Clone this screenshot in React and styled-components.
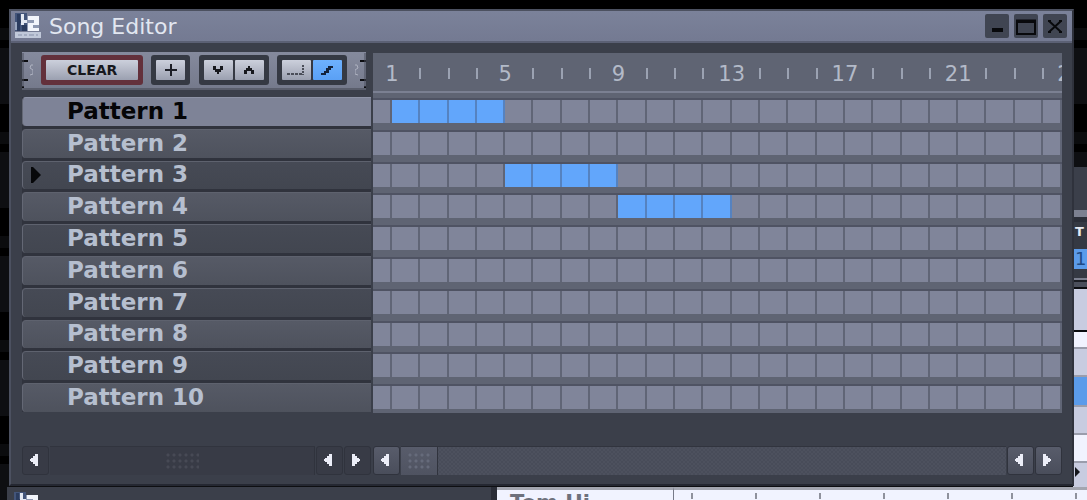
import React, { useState } from 'react';
import styled, { createGlobalStyle } from 'styled-components';

const GlobalStyle = createGlobalStyle`
  * {
    box-sizing: border-box;
  }

  body {
    margin: 0;
    background: #000;
    font-family: "DejaVu Sans", sans-serif;
  }

  button {
    border: none;
    padding: 0;
    margin: 0;
    font-family: inherit;
    cursor: pointer;
  }
`;

const Desktop = styled.div`
  position: relative;
  min-height: 100vh;
  overflow: hidden;
  background: repeating-linear-gradient(#000 0 28px, #0b0c0e 28px 40px, #000 40px 48px, #0e0f12 48px 104px);
`;

/* windows */

const Window = styled.section`
  position: absolute;
  top: 9px;
  left: 9px;
  right: 13px;
  display: flex;
  flex-direction: column;
  border: 2px solid;
  border-color: #4c5160 #2f323c #252832 #4c5160;
  background: #3b3f4a;
`;

const TitleBar = styled.header`
  display: flex;
  align-items: center;
  gap: 8px;
  height: 32px;
  padding: 0 5px 0 4px;
  background: linear-gradient(#7b829a, #747a92);
  border-bottom: 2px solid #5b6074;
`;

const Title = styled.h1`
  flex: 1;
  margin: 0;
  padding-top: 2px;
  font-size: 22px;
  line-height: 28px;
  font-weight: 400;
  color: #e2e7f1;
`;

const WindowButtons = styled.div`
  display: flex;
  gap: 5px;
`;

const WindowButton = styled.button`
  display: flex;
  width: 24px;
  height: 24px;
  background: #404552;
  border-radius: 2px;
`;

const Body = styled.div`
  display: grid;
  grid-template-columns: 349px minmax(0, 1fr);
  column-gap: 2px;
  padding: 9px 10px 9px 11px;
`;

/* toolbar */

const ToolbarArea = styled.div`
  height: 45px;
  padding-right: 5px;
`;

const Toolbar = styled.div`
  display: flex;
  align-items: center;
  justify-content: space-between;
  height: 38px;
  background: linear-gradient(#858a9d, #757a8c);
  border-bottom: 2px solid #5a5e6c;
`;

const Bracket = styled.svg`
  flex: none;
  width: 11px;
  height: 36px;
  transform: ${props => (props.$flip ? 'scaleX(-1)' : 'none')};
`;

const ButtonFrame = styled.div`
  display: flex;
  gap: 2px;
  height: 30px;
  padding: 5px;
  border-radius: 3px;
  background: ${props => (props.$danger ? '#63303b' : '#353943')};
`;

const ToolButton = styled.button`
  display: flex;
  align-items: center;
  justify-content: center;
  width: ${props => (props.$wide ? '92px' : '29px')};
  height: 20px;
  border-radius: 1px;
  font-size: 14px;
  line-height: 20px;
  font-weight: 700;
  color: #17181d;
  background: ${props => (props.$active
    ? 'linear-gradient(#6db1ff, #5aa0f5)'
    : 'linear-gradient(#ccd0dc, #9ba0b0)')};
`;

/* ruler */

const Ruler = styled.div`
  display: grid;
  grid-template-columns: 1fr repeat(24, 6fr) 1fr;
  align-content: center;
  height: 38px;
  margin-top: 1px;
  padding-top: 3px;
  overflow: hidden;
  background: #5f6473;
`;

const RulerLine = styled.div`
  height: 6px;
  background: #5f6473;
  border-top: 2px solid #7b8092;
`;

const RulerMark = styled.span`
  display: flex;
  align-items: center;
  justify-content: ${props => (props.$last ? 'flex-start' : 'center')};
  min-width: 0;
  height: 28px;
  font-size: 21px;
  white-space: nowrap;
  color: #b3bac8;
`;

const RulerTick = styled.i`
  width: 2px;
  height: 11px;
  background: #9ba2b2;
`;

/* patterns */

const PatternList = styled.div`
  display: grid;
  grid-template-rows: repeat(10, minmax(0, 1fr));
  row-gap: 3px;
  height: 315px;
  background: #30333d;
`;

const patternBackground = (props) => {
  if (props.$selected) return '#7e8397';
  return props.$odd ? 'linear-gradient(#464a55, #424650)' : 'linear-gradient(#565a66, #4e525d)';
};

const PatternButton = styled.button`
  display: flex;
  align-items: center;
  padding-bottom: 2px;
  border-radius: 4px 0 0 4px;
  border-top: 1px solid ${props => (props.$selected ? '#8e93a6' : '#5e626e')};
  border-left: 1px solid #646875;
  background: ${patternBackground};
  color: ${props => (props.$selected ? '#050507' : '#b6bfcf')};
  font-size: 23px;
  line-height: 24px;
  font-weight: 700;
  text-align: left;
`;

const PatternMark = styled.span`
  display: flex;
  width: 44px;
  padding: 2px 0 0 7px;
`;

const Song = styled.div`
  display: grid;
  grid-template-rows: repeat(10, minmax(0, 1fr));
  row-gap: 3px;
  height: 316px;
  margin-bottom: -1px;
  padding-top: 1px;
  background: #5f6473;
`;

const SongRow = styled.div`
  display: grid;
  grid-template-columns: 2fr repeat(23, 3fr) 2fr;
  align-content: start;
  border-top: 2px solid #4f5363;
`;

const Cell = styled.button`
  min-width: 0;
  height: 23px;
  background: ${props => (props.$on ? '#62a6fb' : '#80859a')};
  border-right: 2px solid ${props => (props.$on ? '#5582c0' : '#606576')};
`;

/* scrollbars */

const ScrollBar = styled.div`
  display: flex;
  gap: 1px;
  height: 29px;
  margin-top: 34px;
`;

const ScrollButton = styled.button`
  display: flex;
  align-items: center;
  justify-content: center;
  width: 27px;
  padding-right: 3px;
  padding-bottom: 1px;
  border: 1px solid #30333d;
  border-radius: 3px;
  background: ${props => (props.$light ? 'linear-gradient(#585c6b, #4a4e5b)' : '#383b46')};
`;

const Track = styled.div`
  flex: 1;
  display: flex;
  background: ${props => (props.$light
    ? 'repeating-conic-gradient(#484c59 0 25%, #4d515e 0 50%) 0 0 / 4px 4px'
    : '#383b46')};
  border-top: 1px solid #31343e;
`;

const Thumb = styled.div`
  display: flex;
  align-items: center;
  justify-content: center;
  width: ${props => (props.$full ? '100%' : '37px')};
  background: ${props => (props.$full ? 'none' : 'linear-gradient(#585c6b, #4f5361)')};
  border-right: 1px solid #30333d;
`;

const Grip = styled.span`
  width: ${props => (props.$wide ? '34px' : '24px')};
  height: 18px;
  background: radial-gradient(circle, ${props => (props.$wide ? '#474a55' : '#666b7b')} 1px, transparent 2px) 0 0 / 6px 6px;
`;

/* windows behind */

const Mixer = styled.aside`
  position: absolute;
  top: 167px;
  right: 0;
  bottom: 0;
  width: 14px;
  display: flex;
  flex-direction: column;
  align-items: stretch;
  overflow: hidden;
  background: #3b3f4a;
`;

const MixerStrip = styled.div`
  flex: none;
  height: ${props => props.$height}px;
  background: ${props => props.$color};
  border-bottom: ${props => (props.$line ? `2px solid ${props.$line}` : 'none')};
  padding-left: 2px;
  font-size: 13px;
  line-height: 20px;
  font-weight: 700;
  color: #e6e9f2;
`;

const MixerDisplay = styled(MixerStrip)`
  font-size: 18px;
  font-weight: 400;
  color: #1f4a86;
`;

const PatternEditor = styled.section`
  position: absolute;
  top: 487px;
  left: 7px;
  right: 0;
  height: 40px;
  display: grid;
  grid-template-columns: 490px 177px minmax(0, 1fr);
`;

const EditorTitle = styled.div`
  padding: 5px 7px;
  background: #3b3f4a;
  border-right: 6px solid #2a2d37;
`;

const InstrumentName = styled.div`
  padding: 3px 13px;
  border-top: 3px solid #a3a6b0;
  border-right: 1px solid #777a88;
  background: #f1f3ff;
  color: #6e717c;
  font-size: 21px;
  line-height: 20px;
  font-weight: 700;
`;

const NoteLane = styled.div`
  display: flex;
  gap: 62px;
  padding: 3px 17px;
  overflow: hidden;
  border-top: 3px solid #a3a6b0;
  background: #f1f3ff;
`;

const NoteTick = styled.i`
  flex: none;
  width: 2px;
  height: 6px;
  background: #8f919c;
`;

const PATTERN_COUNT = 10;
const COLUMN_COUNT = 25;

const initialSong = {
  0: [1, 2, 3, 4],
  2: [5, 6, 7, 8],
  3: [9, 10, 11, 12],
};

const range = (count) => Array.from({ length: count }, (_, i) => i);

function Logo() {
  return (
    <svg width="26" height="26" viewBox="0 0 26 26" aria-hidden="true">
      <path d="M0 0h12v18H0z" fill="#43557a" />
      <path d="M2 1h3v6h2v3H5v8H2z" fill="#2b3c5e" />
      <path d="M6 1h3v6h3v3H9v2H6z" fill="#e4e9f2" />
      <path d="M7 12h5v6H7z" fill="#2b3c5e" />
      <path d="M0 9h2v8H0z" fill="#9aa7bf" />
      <path d="M12 3h12v15H12z" fill="#8d98b1" />
      <path d="M13 3h11v9h-6v3h6v3H13v-8h6V7h-6z" fill="#f2f5fb" />
      <path d="M0 19h26v6H0z" fill="#c0c8d9" />
      <path d="M3 22h4M9 22h3M14 22h5M21 22h2" stroke="#a3acc1" strokeWidth="2" />
    </svg>
  );
}

function ToolbarEnd({ flip }) {
  return (
    <Bracket viewBox="0 0 11 36" $flip={flip} aria-hidden="true">
      <path d="M0 9h6M0 28h6M0 35h2" stroke="#0c0d11" strokeWidth="2" />
      <path d="M1 1v34" stroke="#4b4f5c" strokeWidth="1" />
      <path d="M11 13H9l-1 3 3 2v4l-3 1" fill="none" stroke="#aeb2c0" strokeWidth="1" />
    </Bracket>
  );
}

function Arrow({ right }) {
  return (
    <svg width="10" height="14" viewBox="0 0 10 14" aria-hidden="true">
      <path d={right ? 'M1 1h3v2h2v2h2v1h1v2H8v1H6v2H4v2H1z' : 'M9 1H6v2H4v2H2v1H1v2h1v1h2v2h2v2h3z'} fill="#eceef8" />
    </svg>
  );
}

function App() {
  const [selected, setSelected] = useState(0);
  const [song, setSong] = useState(initialSong);
  const [mode, setMode] = useState('draw');

  const toggleCell = (row, column) => {
    const cells = song[row] || [];
    setSong({
      ...song,
      [row]: cells.includes(column) ? cells.filter(c => c !== column) : [...cells, column],
    });
  };

  return (
    <Desktop>
      <GlobalStyle />

      <Mixer>
        <MixerStrip $height={43} $color="#3b3f4a" />
        <MixerStrip $height={7} $color="#7c8090" />
        <MixerStrip $height={5} $color="#2b2e38" />
        <MixerStrip $height={27} $color="#353943">T</MixerStrip>
        <MixerDisplay $height={20} $color="#5b9bea">1</MixerDisplay>
        <MixerStrip $height={9} $color="#353943" />
        <MixerStrip $height={4} $color="#7c8090" $line="#1c1e25" />
        <MixerStrip $height={7} $color="#4a4e5b" $line="#0b0c10" />
        <MixerStrip $height={43} $color="#c8cce0" $line="#0b0c10" />
        <MixerStrip $height={17} $color="#f1f3ff" $line="#9a9dac" />
        <MixerStrip $height={28} $color="#c8cce0" $line="#9a9dac" />
        <MixerStrip $height={30} $color="#5b9bea" $line="#9a9dac" />
        <MixerStrip $height={28} $color="#c8cce0" $line="#9a9dac" />
        <MixerStrip $height={28} $color="#f1f3ff" $line="#9a9dac" />
        <MixerStrip $height={28} $color="#c8cce0">
          <svg width="6" height="10" viewBox="0 0 6 10" aria-hidden="true">
            <path d="M0 0l5 5-5 5z" fill="#14161c" />
          </svg>
        </MixerStrip>
      </Mixer>

      <PatternEditor>
        <EditorTitle><Logo /></EditorTitle>
        <InstrumentName>Tom Hi</InstrumentName>
        <NoteLane>
          {range(7).map(i => <NoteTick key={i} />)}
        </NoteLane>
      </PatternEditor>

      <Window>
        <TitleBar>
          <Logo />
          <Title>Song Editor</Title>
          <WindowButtons>
            <WindowButton aria-label="Minimize">
              <svg width="24" height="24" viewBox="0 0 24 24">
                <path d="M7 16h11" stroke="#08090c" strokeWidth="4" />
              </svg>
            </WindowButton>
            <WindowButton aria-label="Maximize">
              <svg width="24" height="24" viewBox="0 0 24 24">
                <path d="M3 8h18v12H3z" fill="none" stroke="#08090c" strokeWidth="2" />
                <path d="M2 7h20" stroke="#08090c" strokeWidth="3" />
              </svg>
            </WindowButton>
            <WindowButton aria-label="Close">
              <svg width="24" height="24" viewBox="0 0 24 24">
                <path d="M6 7l12 11M18 7L6 18" stroke="#08090c" strokeWidth="2" />
                <path d="M5 7h3M16 7h3M5 18h3M16 18h3" stroke="#08090c" strokeWidth="2" />
              </svg>
            </WindowButton>
          </WindowButtons>
        </TitleBar>

        <Body>
          <ToolbarArea>
            <Toolbar>
              <ToolbarEnd />
              <ButtonFrame $danger>
                <ToolButton $wide>CLEAR</ToolButton>
              </ButtonFrame>
              <ButtonFrame>
                <ToolButton aria-label="New pattern">
                  <svg width="14" height="14" viewBox="0 0 14 14">
                    <path d="M7 1v12M1 7h12" stroke="#1d1f27" strokeWidth="2" />
                  </svg>
                </ToolButton>
              </ButtonFrame>
              <ButtonFrame>
                <ToolButton aria-label="Move down">
                  <svg width="12" height="10" viewBox="0 0 12 10">
                    <path d="M1 1h3v3h4V1h3v4H9v2H7v2H5V7H3V5H1z" fill="#17181d" />
                  </svg>
                </ToolButton>
                <ToolButton aria-label="Move up">
                  <svg width="12" height="10" viewBox="0 0 12 10">
                    <path d="M1 9h3V6h4v3h3V5H9V3H7V1H5v2H3v2H1z" fill="#17181d" />
                  </svg>
                </ToolButton>
              </ButtonFrame>
              <ButtonFrame>
                <ToolButton aria-label="Select mode" $active={mode === 'select'} onClick={() => setMode('select')}>
                  <svg width="20" height="12" viewBox="0 0 20 12">
                    <path d="M1 10h15" stroke="#4b4e59" strokeWidth="2" strokeDasharray="3 1" />
                    <path d="M17 1v10" stroke="#4b4e59" strokeWidth="2" strokeDasharray="2 1" />
                  </svg>
                </ToolButton>
                <ToolButton aria-label="Draw mode" $active={mode === 'draw'} onClick={() => setMode('draw')}>
                  <svg width="14" height="12" viewBox="0 0 14 12">
                    <path d="M1 9h3V7h2V4h2V2h5v2h-2v2H9v3H6v2H1z" fill="#14233c" />
                  </svg>
                </ToolButton>
              </ButtonFrame>
              <ToolbarEnd flip />
            </Toolbar>
          </ToolbarArea>

          <div>
            <Ruler>
              <span />
              {range(COLUMN_COUNT).map(i => (
                <RulerMark key={i} $last={i === COLUMN_COUNT - 1}>
                  {i % 4 === 0 ? i + 1 : <RulerTick />}
                </RulerMark>
              ))}
            </Ruler>
            <RulerLine />
          </div>

          <PatternList>
            {range(PATTERN_COUNT).map(i => (
              <PatternButton
                key={i}
                $odd={i % 2 === 0}
                $selected={i === selected}
                onClick={() => setSelected(i)}
              >
                <PatternMark>
                  {i === 2 && (
                    <svg width="12" height="18" viewBox="0 0 12 18" aria-hidden="true">
                      <path d="M1 1h2l8 8-8 8H1z" fill="#07080a" />
                    </svg>
                  )}
                </PatternMark>
                Pattern {i + 1}
              </PatternButton>
            ))}
          </PatternList>

          <Song>
            {range(PATTERN_COUNT).map(row => (
              <SongRow key={row}>
                {range(COLUMN_COUNT).map(column => (
                  <Cell
                    key={column}
                    aria-label={`Pattern ${row + 1}, column ${column}`}
                    $on={(song[row] || []).includes(column)}
                    onClick={() => toggleCell(row, column)}
                  />
                ))}
              </SongRow>
            ))}
          </Song>

          <ScrollBar>
            <ScrollButton aria-label="Scroll left"><Arrow /></ScrollButton>
            <Track>
              <Thumb $full><Grip $wide /></Thumb>
            </Track>
            <ScrollButton aria-label="Scroll left"><Arrow /></ScrollButton>
            <ScrollButton aria-label="Scroll right"><Arrow right /></ScrollButton>
          </ScrollBar>

          <ScrollBar>
            <ScrollButton $light aria-label="Scroll song left"><Arrow /></ScrollButton>
            <Track $light>
              <Thumb><Grip /></Thumb>
            </Track>
            <ScrollButton $light aria-label="Scroll song left"><Arrow /></ScrollButton>
            <ScrollButton $light aria-label="Scroll song right"><Arrow right /></ScrollButton>
          </ScrollBar>
        </Body>
      </Window>
    </Desktop>
  );
}

export default App;
